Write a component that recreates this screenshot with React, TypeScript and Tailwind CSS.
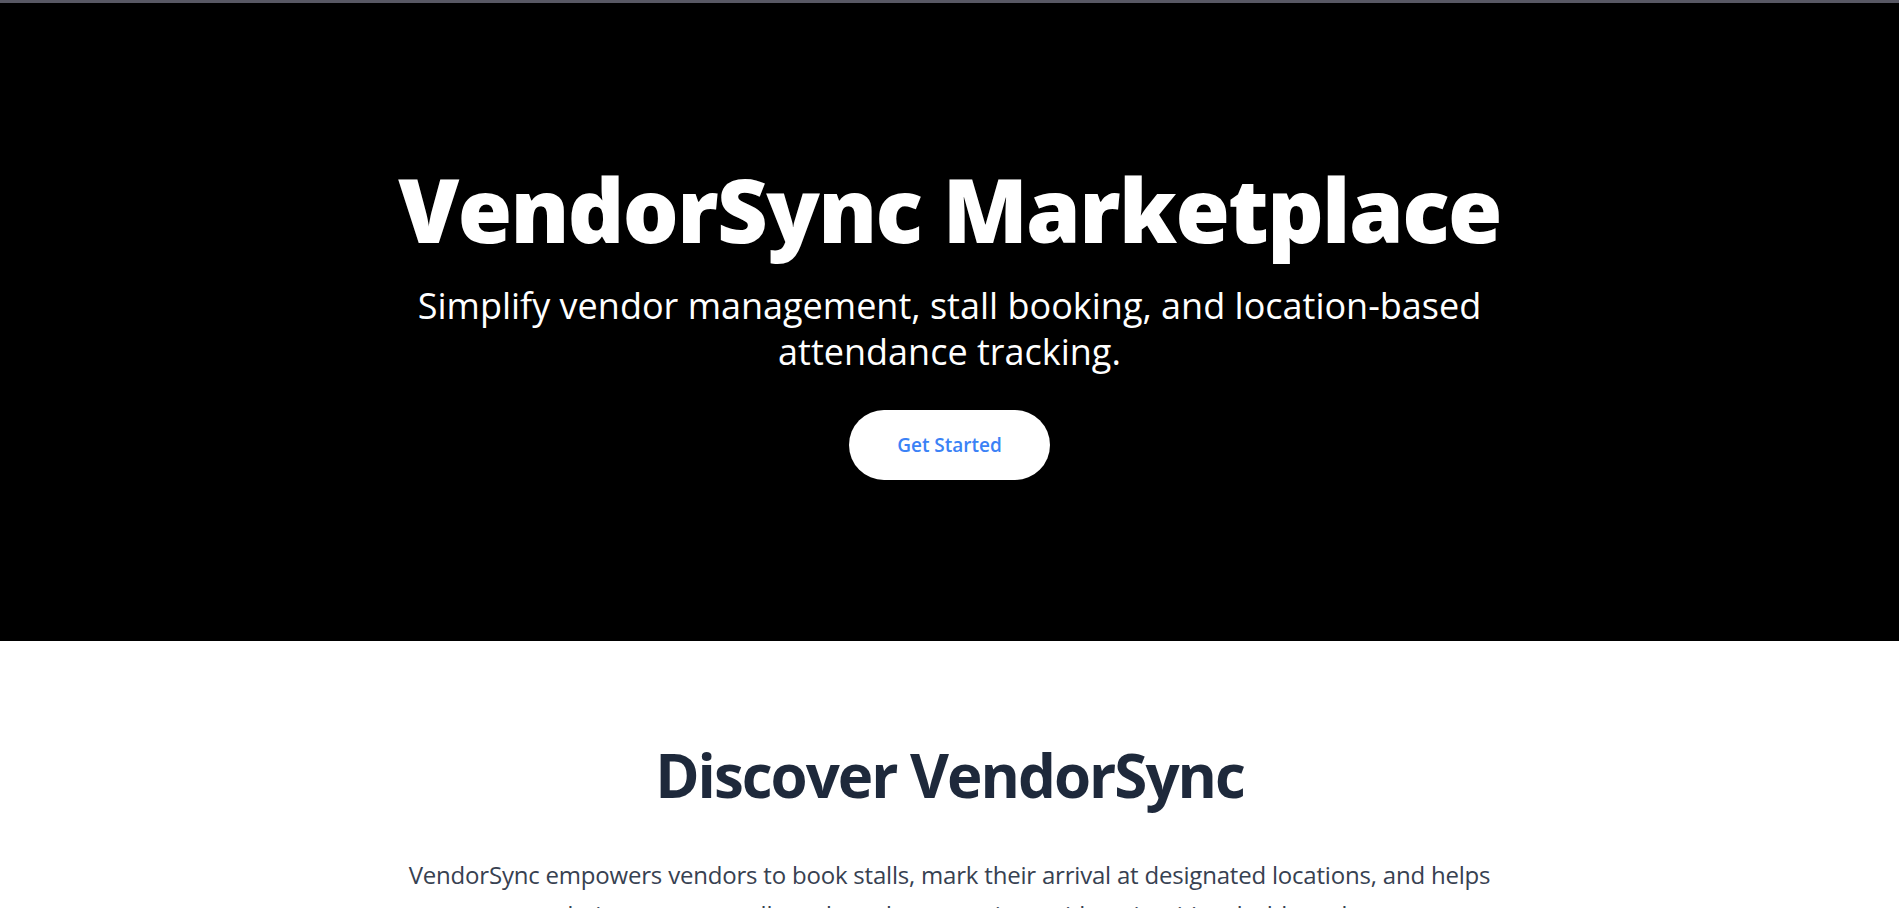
export default function App() {
  return (
    <div className="min-h-screen bg-white font-['Open_Sans',sans-serif]">
      <div className="h-[3px] bg-[#585864]" />
      <section className="flex h-[638px] flex-col items-center justify-center bg-black px-6 text-center text-white">
        <h1 className="text-[88px] font-extrabold leading-none tracking-[-1.6px]">
          VendorSync Marketplace
        </h1>
        <p className="mt-[30px] max-w-[1100px] text-[36px] leading-[46px]">
          Simplify vendor management, stall booking, and location-based attendance tracking.
        </p>
        <button className="mt-[35px] rounded-full bg-white px-12 py-[21px] text-[19px] font-semibold leading-7 text-[#3b82f6]">
          Get Started
        </button>
      </section>
      <section className="flex flex-col items-center px-6 pt-[104px] text-center">
        <h2 className="text-6xl font-bold leading-none tracking-[-2px] text-[#1e293b]">
          Discover VendorSync
        </h2>
        <p className="mt-[50px] max-w-[1120px] text-2xl leading-10 tracking-[-0.2px] text-[#374151]">
          VendorSync empowers vendors to book stalls, mark their arrival at designated locations, and helps
          admins manage stalls and vendor operations with an intuitive dashboard.
        </p>
      </section>
    </div>
  );
}
